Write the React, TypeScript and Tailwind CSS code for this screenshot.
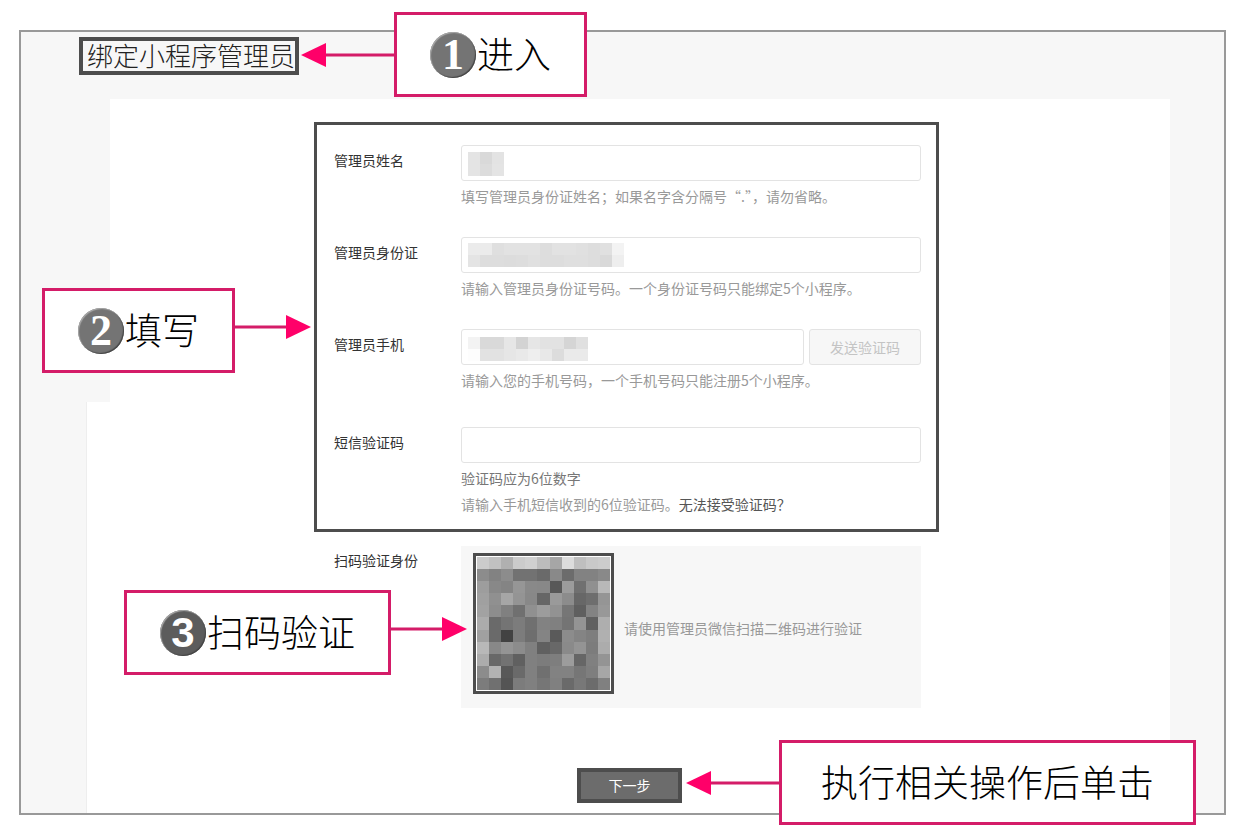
import React from 'react';
import { clsx } from 'clsx';

// grey levels, one hex pair per 12px cell
const NAME_MASK = ['e4 d9 e3', 'e4 dc e4'];
const ID_MASK = [
  'eb eb df e2 e2 e2 dd e2 e2 e0 dd e0 f3',
  'e4 dd dd dc dd e0 dd dd df df dd d9 ee',
];
const PHONE_MASK = ['f3 d9 d9 e6 d3 e6 e2 e2 d5 e0', 'fd e2 e2 e6 e9 ee e8 dc ea ea'];

const QR_MASK = [
  'cb c1 b0 cb d0 bc a6 dc bf c9 cc',
  '8c 82 8c 72 72 6a 89 6c 82 82 89',
  '9d 88 84 96 89 88 58 9c 70 90 b8',
  'a0 90 a6 94 88 66 9a 8c 67 6e 95',
  'a2 8d 80 70 90 9c 92 76 5f 83 98',
  'ac 6a 74 7c 70 82 80 74 94 60 ae',
  'a0 6a 42 7c 6e 84 5a 8c 84 7e b0',
  'b8 88 94 8c 80 60 68 8a 94 7c ac',
  'ac 68 72 60 80 7c 7e 9c 66 80 94',
  '8c b2 58 6a 80 70 82 82 76 7e a6',
  '7c 70 54 7c 80 76 80 6a 78 6c 80',
];

const Mosaic = ({ rows, className }: { rows: string[]; className?: string }) => {
  const cells = rows.map((row) => row.split(' '));
  return (
    <svg
      viewBox={`0 0 ${cells[0].length} ${cells.length}`}
      preserveAspectRatio="none"
      shapeRendering="crispEdges"
      aria-hidden="true"
      className={className}
    >
      {cells.map((row, y) =>
        row.map((c, x) => (
          <rect key={`${x}-${y}`} x={x} y={y} width="1" height="1" fill={`#${c}${c}${c}`} />
        ))
      )}
    </svg>
  );
};

const Arrow = ({ dir, className }: { dir: 'left' | 'right'; className?: string }) =>
  dir === 'left' ? (
    <svg width="93" height="26" viewBox="0 0 93 26" className={clsx('shrink-0', className)}>
      <path d="M24 13H93" stroke="#d41c68" strokeWidth="3" />
      <path d="M0 13L25 1V25Z" fill="#ff0069" />
    </svg>
  ) : (
    <svg width="76" height="26" viewBox="0 0 76 26" className={clsx('shrink-0', className)}>
      <path d="M0 13H52" stroke="#d41c68" strokeWidth="3" />
      <path d="M76 13L51 1V25Z" fill="#ff0069" />
    </svg>
  );

type CalloutProps = {
  step?: number;
  text: string;
  dir: 'left' | 'right';
  className: string;
};

const Callout = ({ step, text, dir, className }: CalloutProps) => (
  <div className={clsx('absolute z-10 flex', className)}>
    {dir === 'left' && <Arrow dir="left" className="mt-[30px]" />}
    <div
      className={clsx(
        'flex h-[85px] items-center gap-px border-3 border-[#d41c68] bg-white whitespace-nowrap',
        step ? 'px-[33px]' : 'px-[39px]'
      )}
    >
      {step && (
        <span
          className={clsx(
            'flex size-[46px] items-center justify-center rounded-full font-bold text-white shadow-[inset_1px_1px_1px_#aaa,inset_-1px_-1px_1px_#444]',
            step === 3
              ? "bg-[#5c5c5c] font-['Liberation_Sans',sans-serif] text-[42px] leading-[42px]"
              : "bg-[#747474] font-['Liberation_Serif',serif] text-[44px] leading-[44px]"
          )}
        >
          {step}
        </span>
      )}
      <span className="pb-1 text-[37px] leading-[40px] font-light text-black">{text}</span>
    </div>
    {dir === 'right' && <Arrow dir="right" className="mt-[26px]" />}
  </div>
);

type FieldProps = {
  id: string;
  label: string;
  mask?: React.ReactNode;
  action?: React.ReactNode;
  children: React.ReactNode;
};

const Field = ({ id, label, mask, action, children }: FieldProps) => (
  <div className="flex">
    <label htmlFor={id} className="w-[127px] shrink-0 leading-[30px] text-[#333]">
      {label}
    </label>
    <div className="min-w-0 flex-1">
      <div className="flex gap-[5px]">
        <div className="relative flex-1">
          <input
            id={id}
            type="text"
            className="block h-9 w-full rounded-[3px] border border-[#e3e3e3] bg-white px-2 outline-none"
          />
          {mask}
        </div>
        {action}
      </div>
      <div className="mt-[2px] leading-[26px] text-[#999]">{children}</div>
    </div>
  </div>
);

export default function App() {
  return (
    <div
      lang="zh-CN"
      className="overflow-x-hidden bg-white pt-[30px] pb-[23px] font-['Noto_Sans_CJK_SC',sans-serif] text-sm"
    >
      <main className="mr-[18px] ml-[19px] border-2 border-[#999] bg-[#f7f7f7]">
        <header className="flex h-[67px] items-start pt-[5px] pl-[58px]">
          <div className="relative">
            <h1 className="border-4 border-[#4d4d4d] pb-[2px] pl-1 text-[26px] leading-[28px] font-light text-[#222]">
              绑定小程序管理员
            </h1>
            <Callout step={1} text="进入" dir="left" className="-top-[25px] left-full ml-[2px]" />
          </div>
        </header>

        <div className="mr-[54px] ml-[65px] flex border-l border-[#eee] bg-white">
          <div className="-ml-px h-[303px] w-6 shrink-0 bg-[#f7f7f7]" />
          <div className="flex flex-1 justify-center pt-[23px] pr-[27px] pb-[10px]">
            <form className="w-full max-w-[625px]" onSubmit={(e) => e.preventDefault()}>
              <div className="relative border-3 border-[#4d4d4d] pt-5 pr-[15px] pb-3 pl-[17px]">
                <Callout step={2} text="填写" dir="right" className="top-[163px] right-full mr-[6px]" />
                <div className="flex flex-col gap-7">
                  <Field
                    id="name"
                    label="管理员姓名"
                    mask={<Mosaic rows={NAME_MASK} className="absolute top-[7px] left-[7px] h-6 w-9" />}
                  >
                    填写管理员身份证姓名；如果名字含分隔号“.”，请勿省略。
                  </Field>
                  <Field
                    id="idcard"
                    label="管理员身份证"
                    mask={<Mosaic rows={ID_MASK} className="absolute top-[6px] left-[7px] h-6 w-[156px]" />}
                  >
                    请输入管理员身份证号码。一个身份证号码只能绑定5个小程序。
                  </Field>
                  <Field
                    id="phone"
                    label="管理员手机"
                    mask={<Mosaic rows={PHONE_MASK} className="absolute top-2 left-[7px] h-6 w-[120px]" />}
                    action={
                      <button
                        type="button"
                        disabled
                        className="h-9 w-28 rounded-[3px] border border-[#e3e3e3] bg-[#f7f7f7] text-[#c4c4c4]"
                      >
                        发送验证码
                      </button>
                    }
                  >
                    请输入您的手机号码，一个手机号码只能注册5个小程序。
                  </Field>
                </div>
                <div className="mt-[34px]">
                  <Field id="code" label="短信验证码">
                    <p className="text-[#777]">验证码应为6位数字</p>
                    <p>
                      请输入手机短信收到的6位验证码。
                      <a href="#help" className="text-[#555]">
                        无法接受验证码？
                      </a>
                    </p>
                  </Field>
                </div>
              </div>

              <div className="mt-[14px] flex pr-[18px] pl-5">
                <span className="w-[127px] shrink-0 leading-7 text-[#333]">扫码验证身份</span>
                <div className="flex flex-1 gap-[10px] bg-[#f7f7f7] pt-[7px] pb-[14px] pl-3">
                  <div className="relative">
                    <div className="size-[141px] border-3 border-[#4d4d4d] bg-white p-px">
                      <Mosaic rows={QR_MASK} className="size-full" />
                    </div>
                    <Callout
                      step={3}
                      text="扫码验证"
                      dir="right"
                      className="top-[37px] right-full mr-[6px]"
                    />
                  </div>
                  <p className="self-center pt-2 text-[#999]">请使用管理员微信扫描二维码进行验证</p>
                </div>
              </div>

              <div className="mt-[60px] flex justify-center pl-[6px]">
                <div className="relative">
                  <button
                    type="submit"
                    className="block h-[35px] w-[105px] border-4 border-[#4d4d4d] bg-[#6c6c6c] pb-px leading-6 text-white"
                  >
                    下一步
                  </button>
                  <Callout
                    text="执行相关操作后单击"
                    dir="left"
                    className="-top-7 left-full ml-1"
                  />
                </div>
              </div>
            </form>
          </div>
        </div>
      </main>
    </div>
  );
}
